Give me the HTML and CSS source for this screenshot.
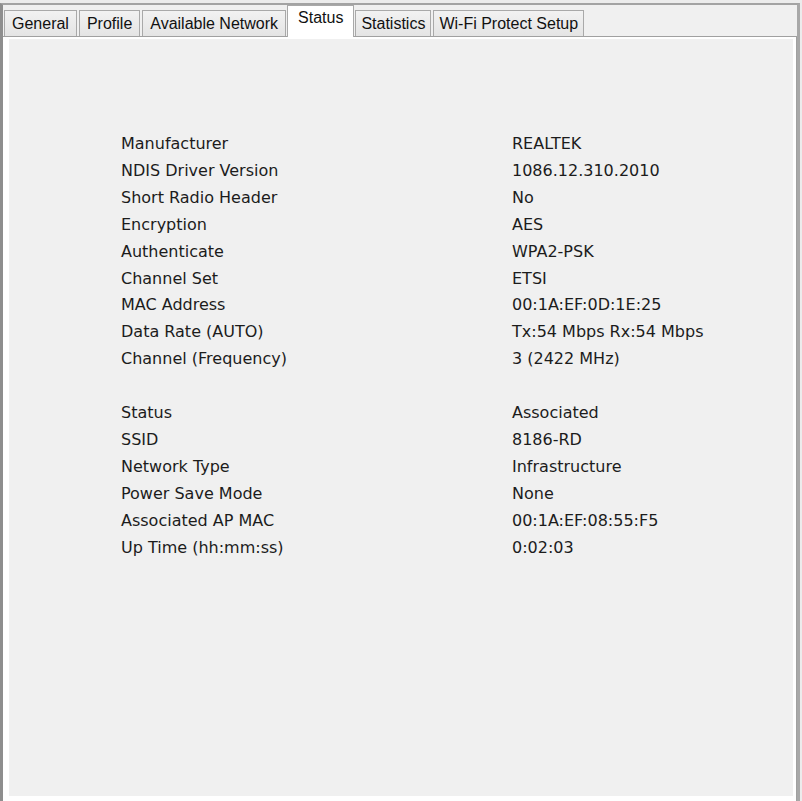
FILE: index.html
```html
<!DOCTYPE html>
<html>
<head>
<meta charset="utf-8">
<link rel="stylesheet" href="styles.css">
</head>
<body>
<div class="window">
  <div class="tabstrip">
    <div class="tab">General</div>
    <div class="tab">Profile</div>
    <div class="tab">Available Network</div>
    <div class="tab active">Status</div>
    <div class="tab tight">Statistics</div>
    <div class="tab tight">Wi-Fi Protect Setup</div>
  </div>
  <div class="panel">
    <div class="content">
      <div class="grid">
        <div class="lbl">Manufacturer</div><div class="val">REALTEK</div>
        <div class="lbl">NDIS Driver Version</div><div class="val">1086.12.310.2010</div>
        <div class="lbl">Short Radio Header</div><div class="val">No</div>
        <div class="lbl">Encryption</div><div class="val">AES</div>
        <div class="lbl">Authenticate</div><div class="val">WPA2-PSK</div>
        <div class="lbl">Channel Set</div><div class="val">ETSI</div>
        <div class="lbl">MAC Address</div><div class="val">00:1A:EF:0D:1E:25</div>
        <div class="lbl">Data Rate (AUTO)</div><div class="val">Tx:54 Mbps Rx:54 Mbps</div>
        <div class="lbl">Channel (Frequency)</div><div class="val">3 (2422 MHz)</div>
        <div class="spacer"></div>
        <div class="lbl">Status</div><div class="val">Associated</div>
        <div class="lbl">SSID</div><div class="val">8186-RD</div>
        <div class="lbl">Network Type</div><div class="val">Infrastructure</div>
        <div class="lbl">Power Save Mode</div><div class="val">None</div>
        <div class="lbl">Associated AP MAC</div><div class="val">00:1A:EF:08:55:F5</div>
        <div class="lbl">Up Time (hh:mm:ss)</div><div class="val">0:02:03</div>
      </div>
    </div>
  </div>
</div>
</body>
</html>
```

FILE: styles.css
```css
html, body {
  margin: 0;
  padding: 0;
}
body {
  width: 802px;
  height: 801px;
  overflow: hidden;
  background: #ececec;
}
.window {
  margin-top: 3px;
  height: 798px;
  box-sizing: border-box;
  border-top: 2px solid #a3a3a3;
  border-left: 3px solid #8e8e8e;
  border-right: 3px solid #a8a8a8;
  margin-right: 2px;
  background: #f0f0f0;
  display: flex;
  flex-direction: column;
}
.tabstrip {
  height: 31px;
  display: flex;
  align-items: flex-end;
  padding-left: 1px;
  gap: 2px;
  position: relative;
  z-index: 1;
}
.tab {
  height: 26px;
  box-sizing: border-box;
  border: 1px solid #a9a9a9;
  border-bottom: none;
  background: linear-gradient(#f2f2f2, #e4e4e4);
  font-family: "Liberation Sans", Arial, sans-serif;
  font-size: 16px;
  color: #111;
  padding: 3px 7px 0;
  line-height: 20px;
  white-space: nowrap;
}
.tab.tight {
  padding-left: 5px;
  padding-right: 5px;
}
.tab.active {
  height: 32px;
  margin-bottom: -1px;
  background: #fff;
  padding-top: 2px;
  margin-left: -1px;
  margin-right: -1px;
  padding-left: 10px;
  padding-right: 10px;
}
.panel {
  flex: 1;
  border-top: 1px solid #a0a0a0;
  border-right: 1px solid #a0a0a0;
  background: #fff;
  padding: 2px 3px 5px 6px;
  display: flex;
}
.content {
  flex: 1;
  background: #f0f0f0;
  padding-top: 92px;
}
.grid {
  display: grid;
  grid-template-columns: 391px auto;
  padding-left: 112px;
  font-family: "DejaVu Sans", Tahoma, sans-serif;
  font-size: 16px;
  line-height: 26.9px;
  color: #1c1c1c;
}
.spacer {
  grid-column: 1 / 3;
  height: 26.9px;
}
```
